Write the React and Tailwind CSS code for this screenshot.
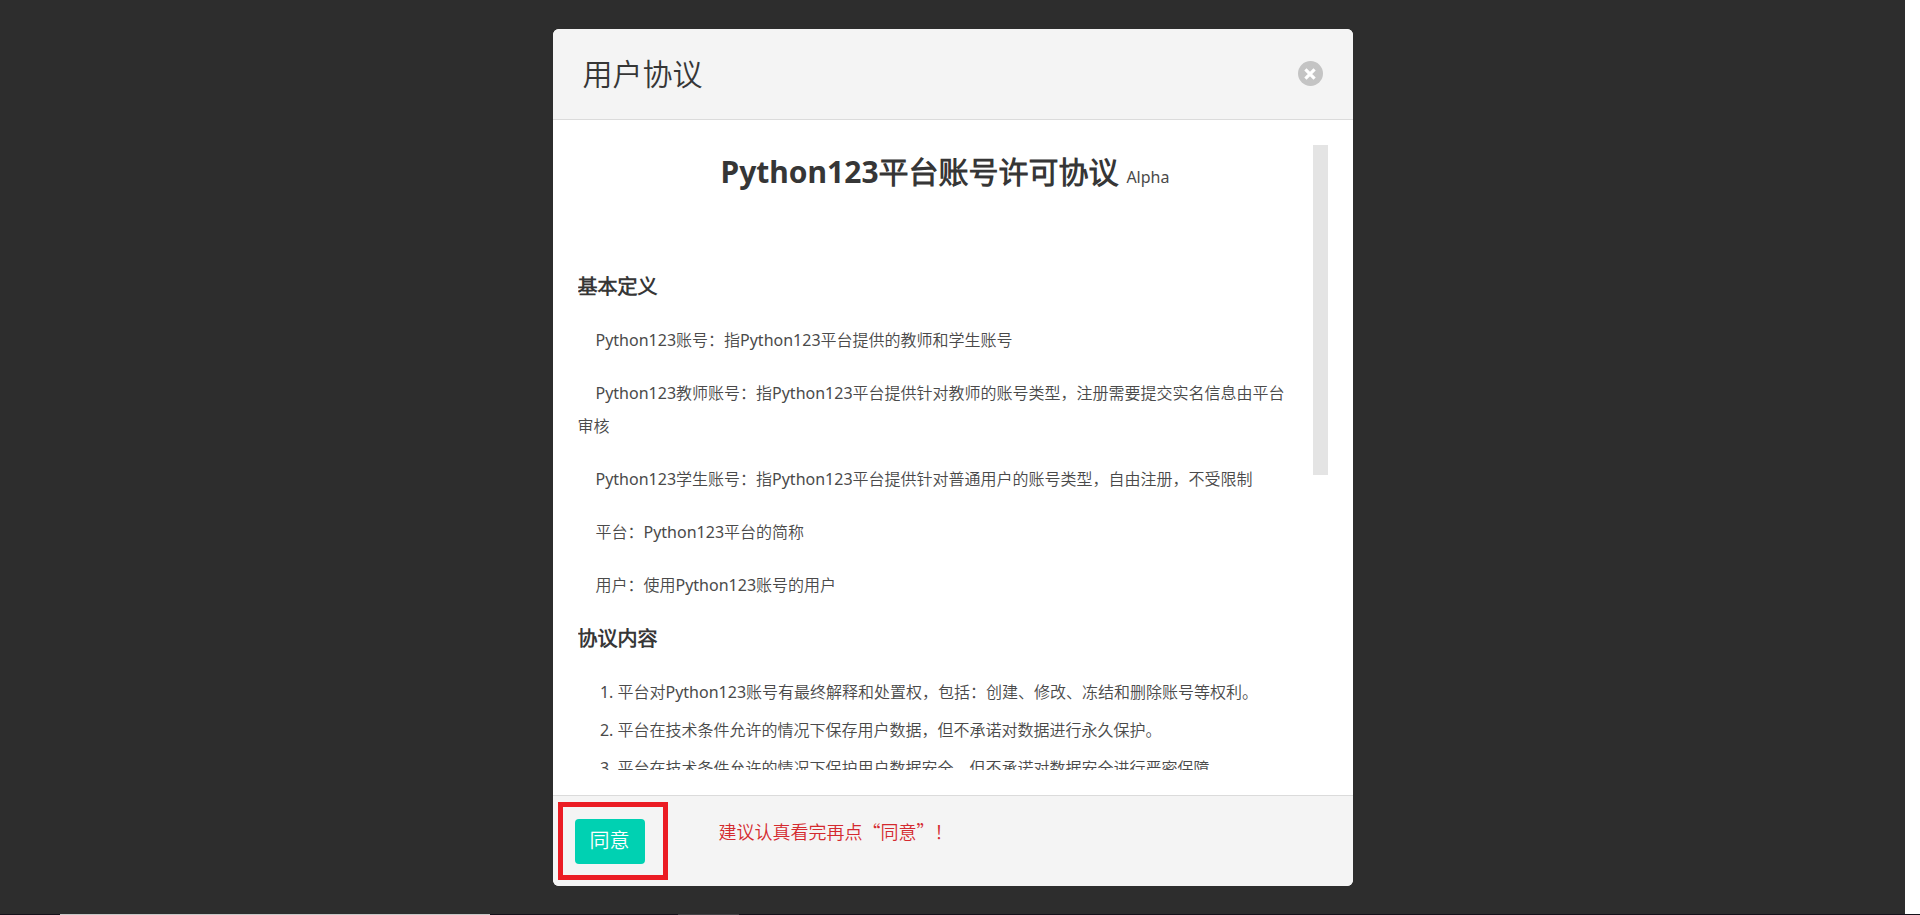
const definitions = [
  'Python123账号：指Python123平台提供的教师和学生账号',
  'Python123教师账号：指Python123平台提供针对教师的账号类型，注册需要提交实名信息由平台审核',
  'Python123学生账号：指Python123平台提供针对普通用户的账号类型，自由注册，不受限制',
  '平台：Python123平台的简称',
  '用户：使用Python123账号的用户',
];

const terms = [
  '平台对Python123账号有最终解释和处置权，包括：创建、修改、冻结和删除账号等权利。',
  '平台在技术条件允许的情况下保存用户数据，但不承诺对数据进行永久保护。',
  '平台在技术条件允许的情况下保护用户数据安全，但不承诺对数据安全进行严密保障。',
];

function CloseButton() {
  return (
    <button type="button" aria-label="关闭" className="flex size-[25px] items-center justify-center rounded-full bg-[#c4c4c4]">
      <svg viewBox="0 0 12 12" className="size-3" fill="none" stroke="#fff" strokeWidth="3.2">
        <path d="M1.4 1.4 10.6 10.6M10.6 1.4 1.4 10.6" />
      </svg>
    </button>
  );
}

function SectionTitle({ children }) {
  return <h3 className="mt-6 mb-6 text-[20px] leading-[26px] font-bold text-[#363636]">{children}</h3>;
}

function Agreement() {
  return (
    <article className="min-w-0 flex-1 overflow-y-auto pt-2 text-[16px] leading-[33px] font-normal [scrollbar-width:none]">
      <h2 className="mb-[78px] text-center text-[30px] leading-[38px] font-bold text-[#363636]">
        Python123平台账号许可协议 <small className="text-[16px] font-normal text-[#4a4a4a]">Alpha</small>
      </h2>
      <SectionTitle>基本定义</SectionTitle>
      {definitions.map((text) => (
        <p key={text} className="mb-5 pr-5 indent-[18px]">{text}</p>
      ))}
      <SectionTitle>协议内容</SectionTitle>
      <ol className="list-decimal space-y-[5px] pl-10">
        {terms.map((text) => (
          <li key={text}>{text}</li>
        ))}
      </ol>
    </article>
  );
}

export default function App() {
  return (
    <div className="flex h-screen flex-col bg-white font-['Noto_Sans','Noto_Sans_CJK_SC_DemiLight','Noto_Sans_CJK_SC',sans-serif] font-[350] text-[#4a4a4a]">
      <div className="mr-[15px] flex min-h-0 flex-1 items-center justify-center bg-[#2d2d2d]">
        <section role="dialog" aria-labelledby="dialog-title" className="flex max-h-[calc(100vh-58px)] w-full max-w-[800px] flex-col rounded-md bg-white">
          <header className="flex shrink-0 items-center justify-between rounded-t-md border-b border-[#dbdbdb] bg-[#f4f4f4] px-[30px] py-6">
            <h1 id="dialog-title" className="text-[30px] leading-[42px] text-[#363636]">用户协议</h1>
            <CloseButton />
          </header>
          <div className="flex min-h-0 flex-1 p-[25px]">
            <Agreement />
            <div className="h-[330px] w-[15px] shrink-0 bg-[#e4e4e4]" />
          </div>
          <footer className="flex shrink-0 items-start rounded-b-md border-t border-[#dbdbdb] bg-[#f4f4f4] px-[22px] pt-[23px] pb-[22px]">
            <div className="relative">
              <button type="button" className="h-[45px] w-[70px] rounded bg-[#00d1b2] text-[20px] text-white">同意</button>
              <div className="pointer-events-none absolute -top-[17px] -left-[17px] h-[78px] w-[110px] border-[5px] border-[#eb1c24]" />
            </div>
            <p className="ml-[74px] font-['Noto_Sans_CJK_SC',sans-serif] text-[18px] leading-6 text-[#d42a2f]">建议认真看完再点“同意”！</p>
          </footer>
        </section>
      </div>
      <div className="flex h-px shrink-0 bg-[#15111a]">
        <div className="ml-[60px] w-[430px] bg-[#c9c6c6]" />
        <div className="ml-[188px] w-[61px] bg-[#454247]" />
      </div>
    </div>
  );
}
